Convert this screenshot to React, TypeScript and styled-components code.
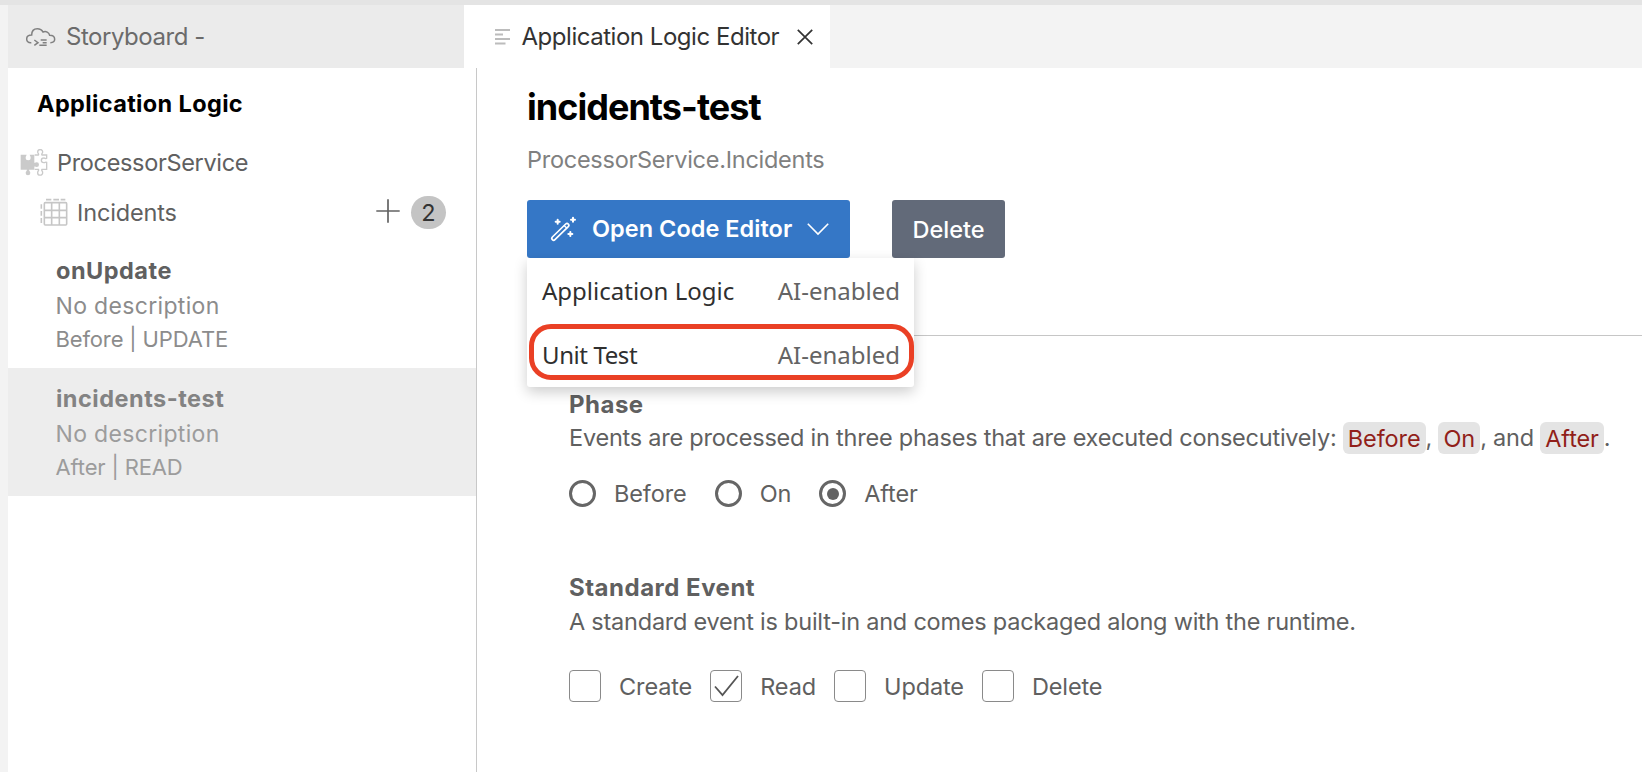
import React from "react";
import styled, { createGlobalStyle } from "styled-components";

const GlobalStyle = createGlobalStyle`
  *, *::before, *::after { box-sizing: border-box; }
  body {
    margin: 0;
    background: #fff;
    color: #606060;
    font-family: Inter, "Liberation Sans", sans-serif;
    font-size: 23.5px;
    font-weight: 400;
    overflow: hidden;
  }
  svg { display: block; flex: none; }
  h1, h2, h3, p { margin: 0; }
  button { font-family: inherit; border: 0; padding: 0; margin: 0; }
`;

const Window = styled.div`
  display: flex;
  flex-direction: column;
  height: 772px;
  width: 1642px;
`;

const TitleStrip = styled.div`
  flex: none;
  height: 5px;
  background: #e4e4e4;
`;

const Workbench = styled.div`
  flex: 1;
  display: flex;
  min-height: 0;
`;

const Gutter = styled.div`
  flex: none;
  width: 8px;
  background: #f3f3f3;
`;

const Editors = styled.div`
  flex: 1;
  display: flex;
  flex-direction: column;
  min-width: 0;
`;

const TabBar = styled.div`
  flex: none;
  display: flex;
  height: 63px;
  background: #f3f3f3;
`;

const Tab = styled.div<{ $active?: boolean }>`
  display: flex;
  align-items: center;
  width: ${(p) => (p.$active ? 366 : 456)}px;
  padding-left: ${(p) => (p.$active ? 31 : 18)}px;
  background: ${(p) => (p.$active ? "#fff" : "#ebebeb")};
  color: ${(p) => (p.$active ? "#333" : "#6b6b6b")};
`;

const TabLabel = styled.span<{ $gap: number }>`
  margin-left: ${(p) => p.$gap}px;
  font-size: 24px;
  letter-spacing: -0.47px;
  white-space: nowrap;
`;

const CloseButton = styled.button`
  margin-left: 18px;
  background: none;
  color: #333;
`;

const Panes = styled.div`
  flex: 1;
  display: flex;
  min-height: 0;
`;

const Sidebar = styled.aside`
  flex: none;
  width: 469px;
  padding-top: 21px;
  border-right: 1px solid #c8c8c8;
`;

const SidebarTitle = styled.h2`
  margin: 0 0 18px;
  padding-left: 29px;
  color: #000;
  font-size: 23.5px;
  font-weight: 700;
  letter-spacing: 0.36px;
  line-height: 30px;
`;

const TreeRow = styled.div<{ $indent: number }>`
  display: flex;
  align-items: center;
  height: 50px;
  padding-left: ${(p) => p.$indent}px;
  padding-right: 30px;
`;

const TreeLabel = styled.span<{ $gap: number; $spacing: number }>`
  margin-left: ${(p) => p.$gap}px;
  letter-spacing: ${(p) => p.$spacing}px;
`;

const RowActions = styled.div`
  display: flex;
  align-items: center;
  gap: 11px;
  margin-left: auto;
`;

const AddButton = styled.button`
  background: none;
  color: #636363;
  padding-bottom: 3px;
`;

const Badge = styled.span`
  display: flex;
  align-items: center;
  justify-content: center;
  width: 35px;
  height: 33px;
  border-radius: 17px;
  background: #c4c4c4;
  color: #333;
`;

const HandlerList = styled.div`
  margin-top: 3px;
`;

const Handler = styled.div<{ $selected?: boolean }>`
  height: 128px;
  padding: 13px 0 0 48px;
  background: ${(p) => (p.$selected ? "#ededed" : "transparent")};
  color: ${(p) => (p.$selected ? "#9c9c9c" : "#8c8c8c")};
`;

const HandlerName = styled.div<{ $selected?: boolean }>`
  color: ${(p) => (p.$selected ? "#838383" : "#606060")};
  font-weight: 700;
  letter-spacing: 0.5px;
  line-height: 35px;
`;

const HandlerDescription = styled.div`
  margin-left: -0.5px;
  padding-top: 1px;
  font-size: 23px;
  letter-spacing: 0.33px;
  line-height: 35px;
`;

const HandlerMeta = styled.div`
  margin-left: -0.5px;
  font-size: 22px;
  letter-spacing: -0.14px;
  line-height: 31px;
`;

const Main = styled.main`
  flex: 1;
  min-width: 0;
  padding: 17px 0 0 50px;
`;

const Title = styled.h1`
  color: #000;
  font-size: 36px;
  font-weight: 700;
  letter-spacing: -0.97px;
  line-height: 44px;
`;

const Subtitle = styled.p`
  margin-top: 15px;
  color: #808080;
  letter-spacing: -0.265px;
  line-height: 32px;
`;

const Toolbar = styled.div`
  display: flex;
  gap: 42px;
  margin-top: 24px;
`;

const MenuAnchor = styled.div`
  position: relative;
`;

const Button = styled.button<{ $primary?: boolean }>`
  display: flex;
  align-items: center;
  justify-content: ${(p) => (p.$primary ? "flex-start" : "center")};
  width: ${(p) => (p.$primary ? 323 : 113)}px;
  height: 58px;
  padding-left: ${(p) => (p.$primary ? 22.5 : 0)}px;
  padding-top: ${(p) => (p.$primary ? 0 : 1)}px;
  border-radius: 3px;
  background: ${(p) => (p.$primary ? "#3577c6" : "#626a79")};
  color: #fff;
  font-size: 23.5px;
  font-weight: ${(p) => (p.$primary ? 600 : 500)};
`;

const ButtonLabel = styled.span`
  margin: 0 14.5px 0 14.5px;
  padding-bottom: 2px;
  letter-spacing: 0.03px;
  white-space: nowrap;
`;

const Menu = styled.div`
  position: absolute;
  z-index: 1;
  top: 58px;
  left: 0;
  width: 387px;
  border-radius: 0 0 3px 3px;
  background: #fff;
  box-shadow: 0 5px 14px rgba(0, 0, 0, 0.2);
  font-family: "Noto Sans", "Open Sans", sans-serif;
  font-size: 24px;
  font-weight: 400;
`;

const MenuItem = styled.div`
  position: relative;
  display: flex;
  align-items: center;
  justify-content: space-between;
  height: 64.5px;
  padding: 0 14px 0 15px;
  color: #2f2f2f;
`;

const MenuText = styled.span<{ $spacing?: number }>`
  letter-spacing: ${(p) => p.$spacing ?? 0}px;
`;

const MenuHint = styled.span`
  color: #646464;
`;

const Highlight = styled.span`
  position: absolute;
  top: 1.5px;
  left: 2px;
  width: 385px;
  height: 56px;
  border: 5px solid #ea4025;
  border-radius: 22px;
`;

const Divider = styled.div`
  height: 1px;
  margin-top: 77px;
  background: #c6c6c6;
`;

const Section = styled.section<{ $top: number }>`
  margin-top: ${(p) => p.$top}px;
  padding-left: 42px;
`;

const SectionTitle = styled.h3`
  font-size: 24px;
  font-weight: 700;
  letter-spacing: 0.5px;
  line-height: 34px;
`;

const SectionText = styled.p<{ $lineHeight: number }>`
  letter-spacing: -0.232px;
  line-height: ${(p) => p.$lineHeight}px;
  white-space: nowrap;
`;

const Chip = styled.code`
  padding: 1.5px 5px;
  border-radius: 6px;
  background: #e4e4e4;
  color: #911f1a;
  font-family: inherit;
  font-size: inherit;
  letter-spacing: -0.1px;
`;

const Options = styled.div<{ $top: number; $height: number; $gap: number }>`
  display: flex;
  gap: ${(p) => p.$gap}px;
  height: ${(p) => p.$height}px;
  margin-top: ${(p) => p.$top}px;
`;

const Option = styled.label`
  display: flex;
  align-items: center;
  gap: 18px;
  letter-spacing: -0.12px;
`;

const RadioMark = styled.span`
  display: flex;
  align-items: center;
  justify-content: center;
  width: 27px;
  height: 27px;
  border: 3px solid #666;
  border-radius: 50%;
`;

const RadioDot = styled.span`
  width: 12px;
  height: 12px;
  border-radius: 50%;
  background: #636363;
`;

const CheckMark = styled.span`
  display: flex;
  align-items: center;
  justify-content: center;
  width: 32px;
  height: 32px;
  border: 1px solid #8a8a8a;
  border-radius: 4px;
  color: #555;
`;

const CloudIcon = () => (
  <svg width="30" height="20" viewBox="0 0 90 60" fill="none" stroke="#808080" strokeWidth="4.5">
    <path d="M16 47C6 48 2 42 2 36C2 29 8 24 17 24C17 12 24 5 34 5C42 5 48 9 51 15C60 11 69 16 71 25C81 25 86 30 86 37C86 43 82 47 73 47" />
    <path d="M25 39L36 47L25 55M44 39H62M50 47H62M40 55H62" />
  </svg>
);

const LinesIcon = () => (
  <svg width="15" height="18" viewBox="0 0 15 18" stroke="#bcbcbc" strokeWidth="2">
    <path d="M0 2H15M0 6.6H8M0 11.1H15M0 15.6H10.5" />
  </svg>
);

const CloseIcon = () => (
  <svg width="16" height="16" viewBox="0 0 16 16" stroke="currentColor" strokeWidth="1.7">
    <path d="M.8 .8L15.2 15.2M15.2 .8L.8 15.2" />
  </svg>
);

const PuzzleIcon = () => (
  <svg width="28" height="27" viewBox="0 0 84 81">
    <path
      fill="#cacaca"
      d="M2 17H20C19 20 17 22 17 26A7.5 7.5 0 0 0 32 26C32 22 30 20 29 17H43V41C46 42 47 40 50 40A7 7 0 0 1 50 54C47 54 46 52 43 53V62H27C27 65 31 67 31 72A7 7 0 0 1 17 72C17 67 21 65 21 62H2Z"
    />
    <path
      fill="none"
      stroke="#cacaca"
      strokeWidth="4"
      d="M44 18H55C58 15 53 13 53 9A7.5 7.5 0 0 1 68 9C68 13 63 15 66 18H80V28C77 31 75 26 71 27A7 7 0 0 0 71 41C75 42 77 37 80 40V61H66C63 64 68 66 68 71A7.5 7.5 0 0 1 53 71C53 66 58 64 55 61H44"
    />
  </svg>
);

const TableIcon = () => (
  <svg width="28" height="28" viewBox="0 0 84 84" fill="none" stroke="#c6c6c6" strokeWidth="4.8">
    <rect x="13" y="14" width="67" height="67" rx="3" />
    <path d="M35 14V81M58 14V81M13 37H80M13 59H80" />
    <path d="M18 5H34M40 5H57M62 5H76M4 19V32M4 39V53M4 60V75" />
  </svg>
);

const PlusIcon = () => (
  <svg width="24" height="24" viewBox="0 0 24 24" stroke="currentColor" strokeWidth="1.7">
    <path d="M12 .3V23.7M.3 12H23.7" />
  </svg>
);

const WandIcon = () => (
  <svg width="28" height="27" viewBox="0 0 84 81" fill="none" strokeLinecap="round">
    <path d="M11 67L51 28" stroke="#fff" strokeWidth="16" />
    <path d="M11 67L51 28" stroke="#3577c6" strokeWidth="6" />
    <path d="M43 29L50 36" stroke="#fff" strokeWidth="4" />
    <path d="M23 11V23M17 17H29M69 5V17M63 11H75M61 48V60M55 54H67" stroke="#fff" strokeWidth="6" />
  </svg>
);

const ChevronIcon = () => (
  <svg width="22" height="13" viewBox="0 0 22 13" fill="none" stroke="currentColor" strokeWidth="1.6">
    <path d="M.8 .8L11 11L21.2 .8" />
  </svg>
);

const TickIcon = () => (
  <svg width="25" height="22" viewBox="0 0 25 22" fill="none" stroke="currentColor" strokeWidth="1.8">
    <path d="M1 11.5L8.5 20L24 1" />
  </svg>
);

const handlers = [
  { name: "onUpdate", meta: "Before | UPDATE", selected: false },
  { name: "incidents-test", meta: "After | READ", selected: true },
];

const phases = ["Before", "On", "After"];
const events = ["Create", "Read", "Update", "Delete"];

export default function App() {
  return (
    <Window>
      <GlobalStyle />
      <TitleStrip />
      <Workbench>
        <Gutter />
        <Editors>
          <TabBar>
            <Tab>
              <CloudIcon />
              <TabLabel $gap={10}>Storyboard -</TabLabel>
            </Tab>
            <Tab $active>
              <LinesIcon />
              <TabLabel $gap={11.5}>Application Logic Editor</TabLabel>
              <CloseButton aria-label="Close">
                <CloseIcon />
              </CloseButton>
            </Tab>
          </TabBar>
          <Panes>
            <Sidebar>
              <SidebarTitle>Application Logic</SidebarTitle>
              <TreeRow $indent={12}>
                <PuzzleIcon />
                <TreeLabel $gap={9} $spacing={-0.33}>ProcessorService</TreeLabel>
              </TreeRow>
              <TreeRow $indent={32}>
                <TableIcon />
                <TreeLabel $gap={9} $spacing={-0.16}>Incidents</TreeLabel>
                <RowActions>
                  <AddButton aria-label="Add">
                    <PlusIcon />
                  </AddButton>
                  <Badge>2</Badge>
                </RowActions>
              </TreeRow>
              <HandlerList>
                {handlers.map((h) => (
                  <Handler key={h.name} $selected={h.selected}>
                    <HandlerName $selected={h.selected}>{h.name}</HandlerName>
                    <HandlerDescription>No description</HandlerDescription>
                    <HandlerMeta>{h.meta}</HandlerMeta>
                  </Handler>
                ))}
              </HandlerList>
            </Sidebar>
            <Main>
              <Title>incidents-test</Title>
              <Subtitle>ProcessorService.Incidents</Subtitle>
              <Toolbar>
                <MenuAnchor>
                  <Button $primary>
                    <WandIcon />
                    <ButtonLabel>Open Code Editor</ButtonLabel>
                    <ChevronIcon />
                  </Button>
                  <Menu>
                    <MenuItem>
                      <MenuText>Application Logic</MenuText>
                      <MenuHint>AI-enabled</MenuHint>
                    </MenuItem>
                    <MenuItem>
                      <MenuText $spacing={-0.4}>Unit Test</MenuText>
                      <MenuHint>AI-enabled</MenuHint>
                      <Highlight />
                    </MenuItem>
                  </Menu>
                </MenuAnchor>
                <Button>Delete</Button>
              </Toolbar>
              <Divider />
              <Section $top={52}>
                <SectionTitle>Phase</SectionTitle>
                <SectionText $lineHeight={32}>
                  Events are processed in three phases that are executed consecutively: <Chip>Before</Chip>,{" "}
                  <Chip>On</Chip>, and <Chip>After</Chip>.
                </SectionText>
                <Options $top={23} $height={33} $gap={28}>
                  {phases.map((p) => (
                    <Option key={p}>
                      <RadioMark>{p === "After" && <RadioDot />}</RadioMark>
                      {p}
                    </Option>
                  ))}
                </Options>
              </Section>
              <Section $top={61}>
                <SectionTitle>Standard Event</SectionTitle>
                <SectionText $lineHeight={34}>
                  A standard event is built-in and comes packaged along with the runtime.
                </SectionText>
                <Options $top={30} $height={34} $gap={18}>
                  {events.map((e) => (
                    <Option key={e}>
                      <CheckMark>{e === "Read" && <TickIcon />}</CheckMark>
                      {e}
                    </Option>
                  ))}
                </Options>
              </Section>
            </Main>
          </Panes>
        </Editors>
      </Workbench>
    </Window>
  );
}
